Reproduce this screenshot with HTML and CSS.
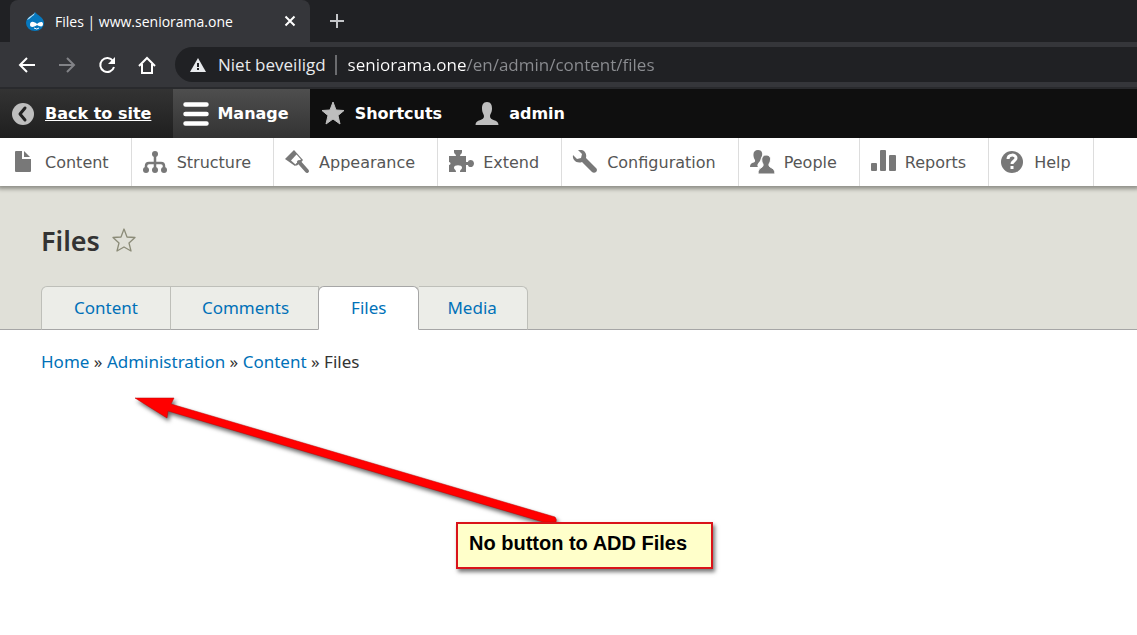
FILE: index.html
```html
<!DOCTYPE html>
<html lang="en">
<head>
    <meta charset="UTF-8">
    <meta name="viewport" content="width=device-width, initial-scale=1.0">
    <title>Files | www.seniorama.one</title>
    <link rel="stylesheet" href="styles.css">
</head>
<body>
    <!-- Browser window -->
    <div class="tab-strip">
        <div class="browser-tab">
            <svg class="favicon" width="20" height="20" viewBox="0 0 20 20">
                <path d="M10 1C10 4 1 5 1 12a9 8 0 0 0 18 0C19 6 12 4 10 1z" fill="#0678be"/>
                <path d="M10 1C9 4 4 5 2 9c3-1 5-4 7-5z" fill="#b9e2f7"/>
                <path d="M5 14c0-5 5-3 7-1 2-2 6-3 6 0 0 4-4 2-6 1-2 2-7 3-7 0z" fill="#fff"/>
                <path d="M9 17q3 2 5 0" fill="none" stroke="#fff"/>
            </svg>
            <span class="browser-tab-title">Files | www.seniorama.one</span>
            <button class="tab-button" aria-label="Close tab">
                <svg width="12" height="12" viewBox="0 0 12 12"><path d="M1.500 1.500l9 9M10.500 1.500l-9 9" stroke="#fff" stroke-width="2"/></svg>
            </button>
        </div>
        <button class="tab-button new-tab" aria-label="New tab">
            <svg width="16" height="16" viewBox="0 0 16 16"><path d="M8 1v14M1 8h14" stroke="#c4c6c9" stroke-width="2"/></svg>
        </button>
    </div>
    <div class="browser-bar">
        <button class="nav-button" aria-label="Back">
            <svg width="20" height="20" viewBox="0 0 20 20"><path d="M18 10H3M10 3l-7 7 7 7" fill="none" stroke="#fff" stroke-width="2"/></svg>
        </button>
        <button class="nav-button" aria-label="Forward">
            <svg width="20" height="20" viewBox="0 0 20 20"><path d="M2 10h15M10 3l7 7-7 7" fill="none" stroke="#828387" stroke-width="2"/></svg>
        </button>
        <button class="nav-button" aria-label="Reload">
            <svg width="20" height="20" viewBox="0 0 20 20"><path d="M16 6a7 7 0 1 0 1 6" fill="none" stroke="#fff" stroke-width="2"/><path d="M18 2v7h-7z" fill="#fff"/></svg>
        </button>
        <button class="nav-button" aria-label="Home">
            <svg width="20" height="20" viewBox="0 0 20 20"><path d="M2 11l8-8 8 8M5 9v9h10V9" fill="none" stroke="#fff" stroke-width="2"/></svg>
        </button>
        <div class="omnibox">
            <svg width="16" height="14" viewBox="0 0 16 14"><path d="M8 0l8 14H0z" fill="#e8eaed"/><path d="M8 5v4M8 10v2" stroke="#202124" stroke-width="2"/></svg>
            <label class="security" for="url">Niet beveiligd</label>
            <input class="url" id="url" type="text" value="seniorama.one/en/admin/content/files" spellcheck="false">
        </div>
    </div>

    <!-- Admin toolbar -->
    <nav class="toolbar">
        <a href="#" class="toolbar-item back">
            <svg width="24" height="24" viewBox="0 0 24 24"><circle cx="12" cy="12" r="11" fill="#bebebe"/><path d="M14 6l-5 6 5 6" fill="none" stroke="#222" stroke-width="3" stroke-linecap="round" stroke-linejoin="round"/></svg>
            <span>Back to site</span>
        </a>
        <a href="#" class="toolbar-item manage">
            <svg width="26" height="24" viewBox="0 0 26 24"><path d="M2.500 2.500h21M2.500 12h21M2.500 21.500h21" stroke="#fff" stroke-width="4.500" stroke-linecap="round"/></svg>
            <span>Manage</span>
        </a>
        <a href="#" class="toolbar-item">
            <svg width="24" height="24" viewBox="0 0 24 24"><path d="M12 0l3 8 8 .5-6 5L19 22l-7-5-7 5 2-8.500-6-5L9 8z" fill="#bebebe" stroke="#bebebe" stroke-linejoin="round"/></svg>
            <span>Shortcuts</span>
        </a>
        <a href="#" class="toolbar-item">
            <svg width="24" height="24" viewBox="0 0 24 24"><path d="M12 0c4 0 5 3 5 6.500 0 4-1.500 5-2 7.500-.5 5 8.500 3 8.500 9H.5c0-6 9-4 8.500-9-.5-2.500-2-3.500-2-7.500C7 3 8 0 12 0z" fill="#bebebe"/></svg>
            <span>admin</span>
        </a>
    </nav>
    <nav class="tray">
        <a href="#" class="tray-item">
            <svg width="26" height="24" viewBox="0 0 26 24" fill="#787878"><path d="M6 1h6v8h9v12a1 1 0 0 1-1 1H6a1 1 0 0 1-1-1V2a1 1 0 0 1 1-1z"/><path d="M14 1l6 6h-6z"/></svg>
            <span>Content</span>
        </a>
        <a href="#" class="tray-item">
            <svg width="26" height="24" viewBox="0 0 26 24"><path d="M13 4v16M4 20v-4q0-3 3-3h12q3 0 3 3v4" fill="none" stroke="#787878" stroke-width="2.500"/><g fill="#787878"><circle cx="13" cy="4" r="3"/><circle cx="4" cy="20" r="3"/><circle cx="13" cy="20" r="3"/><circle cx="22" cy="20" r="3"/></g></svg>
            <span>Structure</span>
        </a>
        <a href="#" class="tray-item">
            <svg width="26" height="24" viewBox="0 0 26 24"><path d="M1 9l9-9 9 10-8 6z" fill="#787878"/><path d="M7 10.500l5.500-6 4.500 5-5.500 5z" fill="#fff"/><path d="M12 15l6-5" stroke="#787878" stroke-width="2"/><path d="M15 12l8 9" stroke="#787878" stroke-width="4" stroke-linecap="round"/></svg>
            <span>Appearance</span>
        </a>
        <a href="#" class="tray-item">
            <svg width="26" height="24" viewBox="0 0 26 24"><path d="M1 6h7c0-2-2-2-2-4V0h8v2c0 2-2 2-2 4h6v6h2c0-3 6-3 6 1.500S20 18 20 15h-2v7h-6c0-3 2-2 2-4.500 0-3-8-3-8 0C6 20 8 19 8 22H1v-7c2 0 2-3 0-3z" fill="#787878"/></svg>
            <span>Extend</span>
        </a>
        <a href="#" class="tray-item">
            <svg width="26" height="24" viewBox="0 0 26 24"><path d="M6 0l4 0c3 1 5 4 4 8l10 10c1.500 1.500 1 3 0 4s-3 1-4 0L10 12C5 14 0 10 1 5l4 4 4-1 1-4z" fill="#787878"/></svg>
            <span>Configuration</span>
        </a>
        <a href="#" class="tray-item">
            <svg width="26" height="24" viewBox="0 0 26 24" fill="#787878"><path d="M9 0c5 0 5 5 3 8l-1 3q-4 4-2 6H1c0-6 6-3 5-7C4 7 3 0 9 0z"/><path d="M17 5c6 0 5 6 3 9-1 5 6 2 6 10H9c0-8 6-5 5-10-2-3-2-9 3-9z" stroke="#fff"/></svg>
            <span>People</span>
        </a>
        <a href="#" class="tray-item">
            <svg width="26" height="24" viewBox="0 0 26 24" fill="#787878"><rect x="1" y="13" width="6" height="8" rx="1"/><rect x="10" y="0" width="6" height="21" rx="1"/><rect x="19" y="5" width="7" height="16" rx="1"/></svg>
            <span>Reports</span>
        </a>
        <a href="#" class="tray-item">
            <svg width="26" height="24" viewBox="0 0 26 24"><circle cx="13" cy="12" r="11" fill="#787878"/><path d="M9 9c0-5 8-5 8-1 0 3-4 3-4 6M13 16v3" fill="none" stroke="#fff" stroke-width="3"/></svg>
            <span>Help</span>
        </a>
    </nav>

    <!-- Page -->
    <header class="page-header">
        <div class="title-row">
            <h1>Files</h1>
            <button class="add-shortcut" aria-label="Add to shortcuts">
                <svg width="24" height="24" viewBox="0 0 24 24"><path d="M12 1l3 8 8 .5-6 5.500 2 8-7-4-7 4 2-8-6-5.500L9 9z" fill="none" stroke="#8b8b78" stroke-width="1.300" stroke-linejoin="round"/></svg>
            </button>
        </div>
        <nav class="tabs">
            <a href="#">Content</a>
            <a href="#">Comments</a>
            <a href="#" class="active">Files</a>
            <a href="#">Media</a>
        </nav>
    </header>
    <main>
        <nav class="breadcrumb">
            <a href="#">Home</a> » <a href="#">Administration</a> » <a href="#">Content</a> » <span>Files</span>
        </nav>
    </main>

    <!-- Annotation on top of the page -->
    <svg class="arrow" width="430" height="132" viewBox="0 0 430 132">
        <path d="M5 8h39l-3 6 384 113q2 2 1 5h-13L38 21l-1 7z" fill="#f00" stroke="#c00000" stroke-width=".5"/>
    </svg>
    <div class="note">No button to ADD Files</div>
</body>
</html>
```
FILE: styles.css
```css
* {
    box-sizing: border-box;
}
body {
    margin: 0;
    min-height: 100vh;
    position: relative;
    background-color: #fff;
    color: #333;
    font-family: "Noto Sans", sans-serif;
    font-size: 17px;
}
button {
    padding: 0;
    border: 0;
    background: none;
}
svg {
    display: block;
    flex-shrink: 0;
}

/* Browser window */
.tab-strip {
    display: flex;
    height: 42px;
    padding-left: 10px;
    background-color: #202124;
}
.browser-tab {
    display: flex;
    align-items: center;
    width: 300px;
    padding: 0 14px 0 15px;
    border-radius: 8px 8px 0 0;
    background-color: #35363a;
    color: #fff;
    font-family: "Open Sans", sans-serif;
    font-size: 14px;
}
.browser-tab-title {
    flex: 1;
    margin-left: 10px;
}
.new-tab {
    margin-left: 19px;
}
.browser-bar {
    display: flex;
    align-items: center;
    height: 47px;
    padding-left: 17px;
    border-bottom: 2px solid #292a2d;
    background-color: #35363a;
}
.nav-button {
    margin-right: 20px;
}
.omnibox {
    display: flex;
    align-items: center;
    flex: 1;
    height: 35px;
    margin-left: -2px;
    padding-left: 15px;
    border-radius: 18px 0 0 18px;
    background-color: #202124;
    font-family: "Open Sans", sans-serif;
    font-size: 17px;
}
.security {
    margin-left: 12px;
    padding-right: 9px;
    border-right: 2px solid #6b6c6f;
    color: #e8eaed;
    line-height: 20px;
}
.url {
    flex: 1;
    padding: 0;
    margin-left: 11px;
    border: 0;
    outline: none;
    /* host in white, path in grey */
    background: linear-gradient(to right, #fff 119px, #8b8d91 119px);
    -webkit-background-clip: text;
    background-clip: text;
    color: transparent;
    font: inherit;
}

/* Admin toolbar */
.toolbar {
    display: flex;
    height: 49px;
    background-color: #0f0f0f;
    font-family: "DejaVu Sans", Verdana, sans-serif;
    font-size: 16px;
    font-weight: bold;
}
.toolbar-item {
    display: flex;
    align-items: center;
    gap: 10px;
    padding: 0 22px 0 11px;
    color: #fff;
    text-decoration: none;
}
.toolbar-item.back {
    background: linear-gradient(#333, #1f1f1f);
    text-decoration: underline;
}
.toolbar-item.manage {
    gap: 8px;
    padding: 0 21px 0 10px;
    background: linear-gradient(#4e4e4e, #333);
}
.tray {
    display: flex;
    position: relative;
    height: 48px;
    background-color: #fff;
    box-shadow: 0 1px 4px 2px #8f8f88;
    clip-path: inset(0 0 -8px);
    font-family: "DejaVu Sans", Verdana, sans-serif;
    font-size: 16px;
}
.tray-item {
    display: flex;
    align-items: center;
    gap: 9px;
    padding: 0 22px 0 10px;
    border-right: 1px solid #ddd;
    color: #565656;
    text-decoration: none;
}

/* Page */
.page-header {
    padding: 36px 41px 0;
    border-bottom: 1px solid #a6a6a6;
    background-color: #e0e0d8;
}
.title-row {
    display: flex;
    align-items: center;
    gap: 12px;
    height: 36px;
}
h1 {
    margin: 0;
    font-size: 27px;
    font-weight: 600;
}
.tabs {
    display: flex;
    margin: 28px 0 -1px;
}
.tabs a {
    padding: 0 29px 0 31px;
    border: 1px solid #bebfb9;
    border-bottom-color: #a6a6a6;
    border-left-width: 0;
    background-color: #ecede8;
    line-height: 42px;
}
.tabs a:first-child {
    padding: 0 32px;
    border-left-width: 1px;
    border-top-left-radius: 6px;
}
.tabs a:last-child {
    padding: 0 30px 0 28px;
    border-top-right-radius: 6px;
}
.tabs .active {
    margin-left: -1px;
    padding: 0 32px;
    border: 1px solid #a6a6a6;
    border-bottom-color: #fff;
    border-radius: 6px 6px 0 0;
    background-color: #fff;
}
a {
    color: #0071b8;
    text-decoration: none;
}
main {
    padding: 20px 41px;
}
.breadcrumb {
    line-height: 24px;
}

/* Annotation */
.arrow {
    position: absolute;
    top: 390px;
    left: 130px;
    overflow: visible;
    filter: drop-shadow(2px 3px 2px #666);
}
.note {
    position: absolute;
    top: 522px;
    left: 456px;
    width: 257px;
    padding: 8px 11px 13px;
    border: 2px solid #d9131a;
    background-color: #ffffca;
    box-shadow: 2px 3px 4px #777;
    color: #000;
    font-family: "Liberation Sans", Arial, sans-serif;
    font-size: 20px;
    font-weight: bold;
    line-height: 22px;
}
```
